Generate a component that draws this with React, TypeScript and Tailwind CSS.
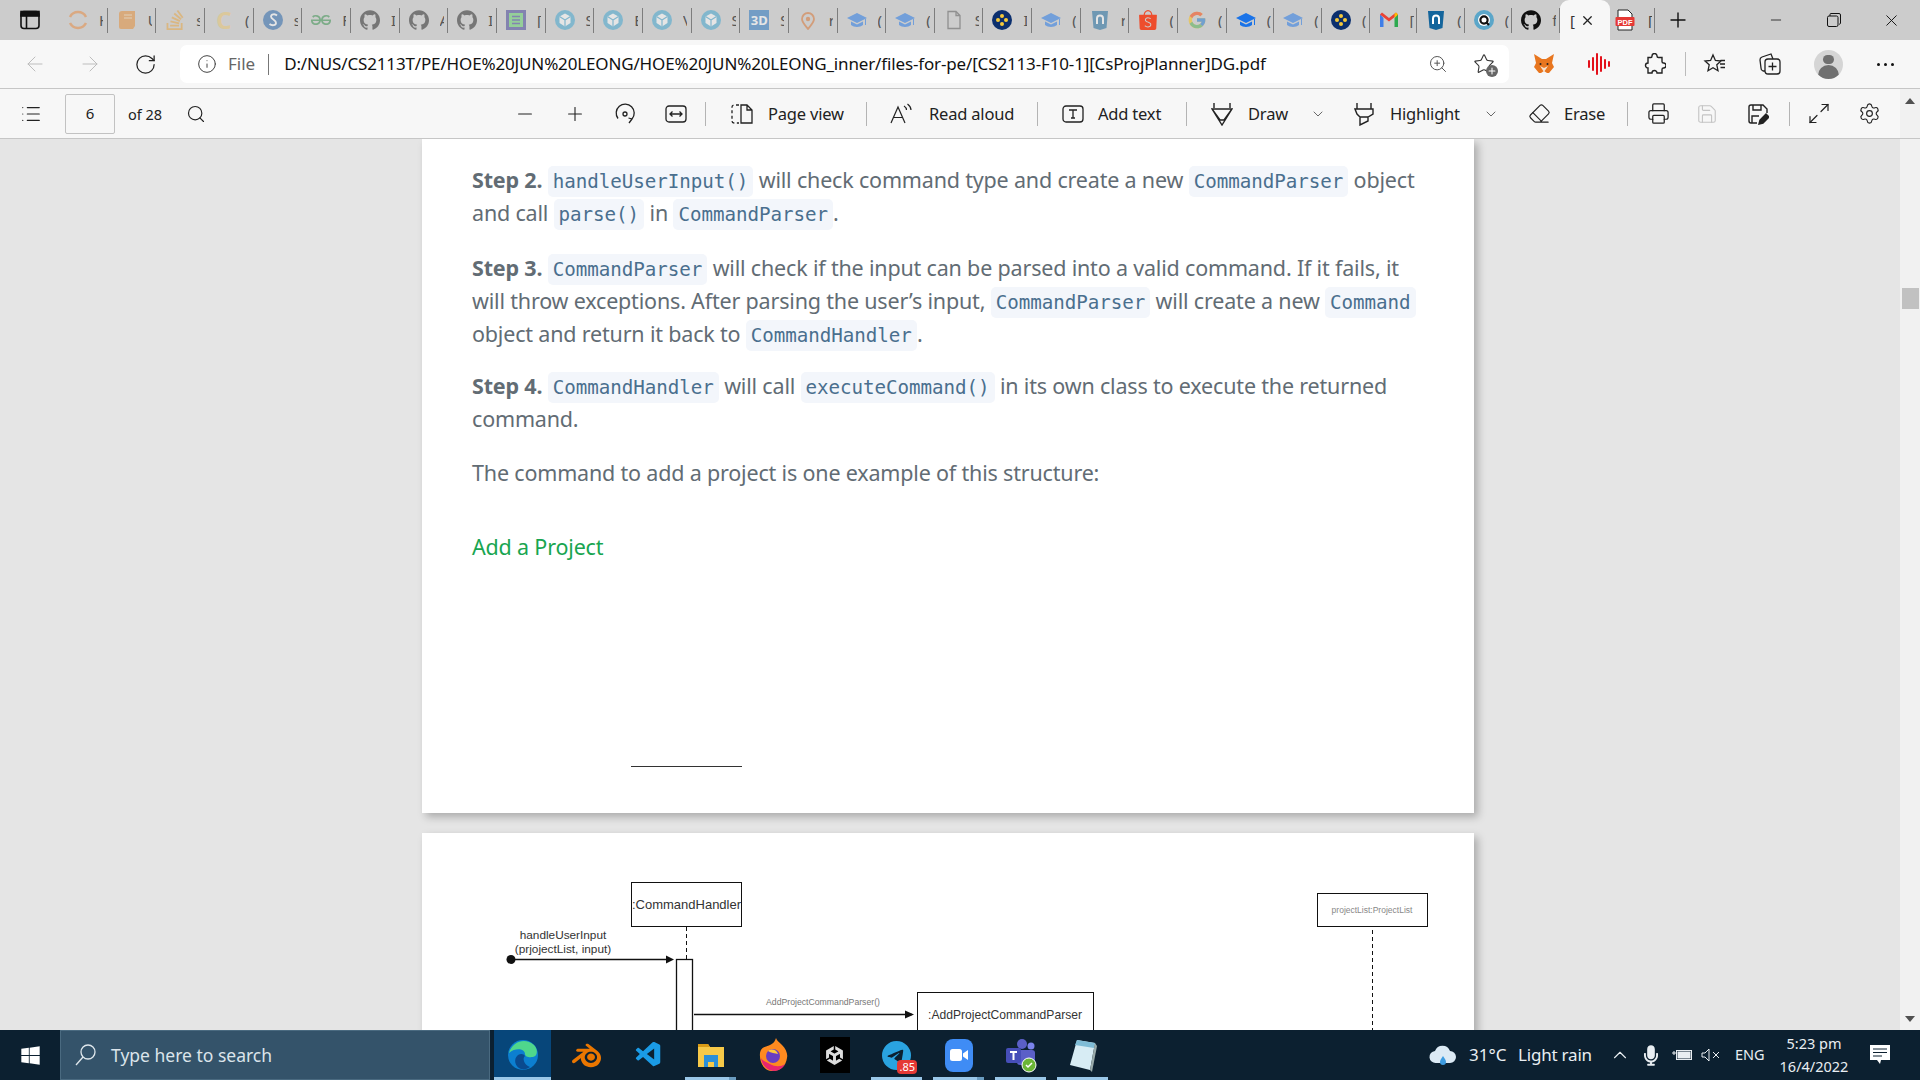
import type { ReactNode } from 'react'
import { ArrowLeft, ArrowRight, ChevronDown, ChevronUp, Eraser, Info, List, Maximize2, Minus, Plus, Printer, RotateCw, Save, Search, Settings, Star, X, ZoomIn } from 'lucide-react'
import { FaWindows, FaMicrophone } from 'react-icons/fa'
import { FcGoogle } from 'react-icons/fc'
import { VscVscode } from 'react-icons/vsc'
import { SiBlender, SiGeeksforgeeks, SiGithub, SiStackoverflow, SiTelegram, SiUnity, SiShopee } from 'react-icons/si'

const Arc = () => (
  <svg width="20" height="20" viewBox="0 0 20 20" fill="none" stroke="#e8873a" strokeWidth="2.5"><path d="M2 7a9 9 0 0 1 16 0M2 13a9 9 0 0 0 16 0" /></svg>
)
const Book = () => (
  <svg width="20" height="20" viewBox="0 0 20 20"><path d="M5 1h13v15l-2 3H4a2 2 0 0 1-2-2V4a3 3 0 0 1 3-3z" fill="#e58a2e" /><path d="M7 5h8M7 8h8" stroke="#f8d7a8" /></svg>
)
const Sblue = () => (
  <svg width="20" height="20" viewBox="0 0 20 20"><circle cx="10" cy="10" r="10" fill="#1f5fa8" /><path d="M14 5.500c-2-2-6-1.500-6 1 0 3 5 3 5 6.500 0 2.500-4 3-6.500 1" fill="none" stroke="#fff" strokeWidth="1.800" /></svg>
)
const Hex = () => (
  <svg width="20" height="20" viewBox="0 0 20 20"><circle cx="10" cy="10" r="10" fill="#3aa3cf" /><path d="M10 3.500l5.500 3v6.500L10 16.500 4.500 13V6.500z" fill="#fff" /><path d="M10 10l5.500-3.500M10 10L4.500 6.500M10 10v6.500" stroke="#3aa3cf" strokeWidth="1.200" /></svg>
)
const GreenDoc = () => (
  <svg width="20" height="20" viewBox="0 0 20 20"><rect width="20" height="20" fill="#3c3c96" /><rect x="3" y="3" width="14" height="14" fill="#5fd068" /><path d="M6 6.500h8M6 10h8M6 13.500h8" stroke="#3c3c96" strokeWidth="1.500" /></svg>
)
const ThreeD = () => (
  <div className="flex h-5 w-5 items-center justify-center bg-[#1c6fc0] text-[13px] font-bold leading-none text-white">3D</div>
)
const Pin = () => (
  <svg width="20" height="20" viewBox="0 0 20 20" fill="none"><path d="M10 19c-4-5-6-7-6-10a6 6 0 0 1 12 0c0 3-2 5-6 10z" stroke="#d9702a" strokeWidth="1.800" /><circle cx="10" cy="9" r="2.200" fill="#d9702a" /></svg>
)
const Cap = ({ color = '#1a73e8' }: { color?: string }) => (
  <svg width="20" height="20" viewBox="0 0 20 20"><path d="M10 3L0 8l10 5 10-5z" fill={color} /><path d="M4 11.500V15c3 2.500 9 2.500 12 0v-3.500L10 14.500z" fill={color} /><path d="M18.500 9v6" stroke={color} /></svg>
)
const Doc = () => (
  <svg width="20" height="20" viewBox="0 0 20 20" fill="none" stroke="#555" strokeWidth="1.300"><path d="M4 1.500h8l4 4v13H4zM12 1.500v4h4" /></svg>
)
const Dots = () => (
  <svg width="20" height="20" viewBox="0 0 20 20"><circle cx="10" cy="10" r="10" fill="#0b2f6e" /><circle cx="10" cy="6" r="2" fill="#f5c93a" /><circle cx="6" cy="10" r="2" fill="#f5c93a" /><circle cx="14" cy="10" r="2" fill="#f5c93a" /><circle cx="10" cy="14" r="2" fill="#f5c93a" /></svg>
)
const Shield = ({ color = '#14659c' }: { color?: string }) => (
  <svg width="20" height="20" viewBox="0 0 20 20"><path d="M2 1h16l-1.500 17-6.500 2-6.500-2z" fill={color} /><path d="M7 14V8.500a3 3 0 0 1 6 0V14" fill="none" stroke="#fff" strokeWidth="2" /></svg>
)
const QCircle = () => (
  <svg width="20" height="20" viewBox="0 0 20 20"><circle cx="10" cy="10" r="10" fill="#5ba6c9" /><circle cx="10" cy="10" r="6" fill="#fff" /><circle cx="10" cy="10" r="3.600" fill="none" stroke="#111" strokeWidth="2.200" /><path d="M12 12l3 3" stroke="#111" strokeWidth="2.200" /></svg>
)
const Gmail = () => (
  <svg width="20" height="20" viewBox="0 0 20 20"><path d="M1 4v13h3.500V8z" fill="#3f7ee8" /><path d="M19 4v13h-3.500V8z" fill="#2da94f" /><path d="M1 4.500l9 7 9-7-2-2-7 5.500L3 2.500z" fill="#ea4335" /><path d="M15.500 8L19 4.500 17 2.500l-1.500 1.200z" fill="#fbbc04" /></svg>
)
const Pdf = () => (
  <svg width="20" height="22" viewBox="0 0 20 22"><path d="M3 1h10l4 4v16H3z" fill="#fff" stroke="#222" /><rect x="0.500" y="8" width="19" height="9" rx="1" fill="#e53935" /><text x="10" y="15.500" textAnchor="middle" fontSize="7.500" fontWeight="700" fill="#fff" fontFamily="Liberation Sans, sans-serif">PDF</text></svg>
)

const TABS: { icon: ReactNode; label: string; faded?: boolean; narrow?: boolean }[] = [
  { icon: <Arc />, label: 'H', faded: true },
  { icon: <Book />, label: 'U', faded: true },
  { icon: <SiStackoverflow size={20} color="#e8a33a" />, label: 's', faded: true },
  { icon: <span className="text-[24px] font-bold leading-none text-[#eac56b]">C</span>, label: '(', faded: true },
  { icon: <Sblue />, label: 's', faded: true },
  { icon: <SiGeeksforgeeks size={20} color="#2f8d46" />, label: 'F', faded: true },
  { icon: <SiGithub size={20} color="#222" />, label: 'I', faded: true },
  { icon: <SiGithub size={20} color="#222" />, label: 'A', faded: true },
  { icon: <SiGithub size={20} color="#222" />, label: 'I', faded: true },
  { icon: <GreenDoc />, label: '[', faded: true },
  { icon: <Hex />, label: 'S', faded: true },
  { icon: <Hex />, label: 'E', faded: true },
  { icon: <Hex />, label: 'V', faded: true },
  { icon: <Hex />, label: 'S', faded: true },
  { icon: <ThreeD />, label: 'S', faded: true },
  { icon: <Pin />, label: 'r', faded: true },
  { icon: <Cap />, label: '(', faded: true },
  { icon: <Cap />, label: '(', faded: true },
  { icon: <Doc />, label: 'S', faded: true },
  { icon: <Dots />, label: 'I' },
  { icon: <Cap />, label: '(', faded: true },
  { icon: <Shield />, label: 'r', faded: true },
  { icon: <SiShopee size={20} color="#ee4d2d" />, label: '(' },
  { icon: <FcGoogle size={20} />, label: '(', faded: true },
  { icon: <Cap />, label: '(', narrow: true },
  { icon: <Cap />, label: '(', faded: true, narrow: true },
  { icon: <Dots />, label: '(', narrow: true },
  { icon: <Gmail />, label: '[', narrow: true },
  { icon: <Shield />, label: '(', narrow: true },
  { icon: <QCircle />, label: '(', narrow: true },
  { icon: <SiGithub size={20} color="#111" />, label: 'f', narrow: true },
]

function Tab({ icon, label, faded, narrow }: (typeof TABS)[number]) {
  return (
    <div className={`relative flex h-full items-center pl-[9px] ${narrow ? 'w-[47.6px]' : 'w-[48.67px]'}`}>
      <div className={`flex h-5 w-5 shrink-0 items-center justify-center ${faded ? 'opacity-50' : ''}`}>{icon}</div>
      <div className="ml-[11px] w-[4px] overflow-hidden text-[15px] leading-none text-[#555]">{label}</div>
      <div className="absolute right-0 top-[8px] h-[25px] w-px bg-[#7d7d7d]" />
    </div>
  )
}

function TabBar() {
  return (
    <div className="flex h-10 items-stretch bg-[#cccccc]">
      <div className="flex w-[59px] shrink-0 items-center pl-[20px]">
        <svg width="20" height="20" viewBox="0 0 20 20" fill="none" stroke="#111" strokeWidth="1.600"><rect x="1" y="1.500" width="18" height="17" rx="3" /><rect x="1" y="1.500" width="18" height="4.500" fill="#111" /><path d="M6.500 6v12" /></svg>
      </div>
      {TABS.map((t, i) => <Tab key={i} {...t} />)}
      <div className="relative flex w-[50px] items-center rounded-t-[9px] bg-[#f7f7f7] pl-[10px]">
        <span className="text-[15px] leading-none text-[#333]">[</span>
        <X size={15} className="ml-[5px] text-[#222]" />
      </div>
      <div className="relative flex w-[45px] items-center pl-[5px]">
        <Pdf />
        <div className="ml-[13px] w-[4px] overflow-hidden text-[15px] leading-none text-[#444]">[</div>
        <div className="absolute right-0 top-[8px] h-[25px] w-px bg-[#7d7d7d]" />
      </div>
      <div className="ml-[11px] flex items-center"><Plus size={24} strokeWidth={1.4} className="text-[#111]" /></div>
      <div className="ml-auto flex">
        <div className="flex w-[58px] items-center justify-center"><Minus size={16} strokeWidth={1.2} className="text-[#111]" /></div>
        <div className="flex w-[57px] items-center justify-center">
          <svg width="14" height="14" viewBox="0 0 14 14" fill="none" stroke="#111"><rect x="0.500" y="3" width="10.500" height="10.500" rx="1.500" /><path d="M3 3V1.500A1 1 0 0 1 4 .5h8a1.500 1.500 0 0 1 1.500 1.500v8a1 1 0 0 1-1.500 1" /></svg>
        </div>
        <div className="flex w-[58px] items-center justify-center"><X size={19} strokeWidth={1.2} className="text-[#111]" /></div>
      </div>
    </div>
  )
}

function Cell({ children, className = '' }: { children: ReactNode; className?: string }) {
  return <div className={`flex w-[46px] shrink-0 items-center justify-center ${className}`}>{children}</div>
}

function AddressBar() {
  return (
    <div className="flex h-[49px] items-center border-b border-[#c6c6c6] bg-[#f7f7f7]">
      <Cell className="ml-[12px]"><ArrowLeft size={24} strokeWidth={1} className="text-[#bdbdbd]" /></Cell>
      <Cell className="ml-[9px]"><ArrowRight size={24} strokeWidth={1} className="text-[#bdbdbd]" /></Cell>
      <Cell className="ml-[9px]"><RotateCw size={23} strokeWidth={1.3} className="text-[#222]" /></Cell>
      <div className="ml-[12px] flex h-[38px] w-[1329px] items-center rounded-[7px] bg-white">
        <Info size={20} strokeWidth={1.2} className="ml-[17px] text-[#444]" />
        <span className="ml-[11px] text-[17px] text-[#666]">File</span>
        <div className="ml-[13px] h-[21px] w-px bg-[#777]" />
        <span className="ml-[15px] whitespace-nowrap text-[17px] tracking-[-0.15px] text-[#111]">D:/NUS/CS2113T/PE/HOE%20JUN%20LEONG/HOE%20JUN%20LEONG_inner/files-for-pe/[CS2113-F10-1][CsProjPlanner]DG.pdf</span>
        <div className="ml-auto flex items-center">
          <ZoomIn size={20} strokeWidth={1.2} className="text-[#555]" />
          <div className="relative ml-[25px] mr-[14px]">
            <Star size={22} strokeWidth={1.2} className="text-[#333]" />
            <div className="absolute -bottom-[2px] -right-[3px] flex h-[12px] w-[12px] items-center justify-center rounded-full bg-[#666] text-[#fff]"><Plus size={10} strokeWidth={2.5} /></div>
          </div>
        </div>
      </div>
      <Cell className="ml-[12px]">
        <svg width="22" height="22" viewBox="0 0 22 22"><path d="M1 1l8 5h4l8-5-2 9 2 4-5 6h-2l-3-2-3 2H6l-5-6 2-4z" fill="#e8761f" /><path d="M7 13l4 6 4-6-4 2z" fill="#f5e2cf" /><circle cx="7.500" cy="11" r="1" fill="#222" /><circle cx="14.500" cy="11" r="1" fill="#222" /></svg>
      </Cell>
      <Cell className="ml-[9px]">
        <svg width="24" height="24" viewBox="0 0 24 24" stroke="#e3101a" strokeWidth="2" strokeLinecap="round"><path d="M2 9v6M6 6v12M10 2v20M14 5v14M18 8v8M22 10v4" /></svg>
      </Cell>
      <Cell className="ml-[10px]">
        <svg width="22" height="22" viewBox="0 0 22 22" fill="none" stroke="#222" strokeWidth="1.400"><path d="M8 3a2.500 2.500 0 0 1 5 0c0 1 .5 1.500 1.500 1.500H18v4c0 1 .5 1.500 1.500 1.500a2.500 2.500 0 0 1 0 5c-1 0-1.500.5-1.500 1.500V20h-5a2.500 2.500 0 0 0-5 0H4v-5a2.500 2.500 0 0 1 0-5V4.500h3C7.500 4.500 8 4 8 3z" /></svg>
      </Cell>
      <div className="ml-[7px] h-[24px] w-px bg-[#bbb]" />
      <Cell className="ml-[6px]">
        <svg width="24" height="24" viewBox="0 0 24 24" fill="none" stroke="#222" strokeWidth="1.300"><path d="M10 3l2.400 5.500 5.600.5-4.200 3.800 1.200 6L10 15.800 5 18.800l1.200-6L2 9l5.600-.5zM17 12h5M17.500 15.500h4.500M17.500 8.500h4.500" /></svg>
      </Cell>
      <Cell className="ml-[9px]">
        <svg width="24" height="24" viewBox="0 0 24 24" fill="none" stroke="#222" strokeWidth="1.300"><rect x="7" y="7" width="15" height="15" rx="3" /><path d="M7 19H5a3 3 0 0 1-2-3L2 8a3 3 0 0 1 2-3l9-3 2 5M14.500 10.500v8M10.500 14.500h8" /></svg>
      </Cell>
      <Cell className="ml-[12px]">
        <div className="flex h-[29px] w-[29px] flex-col items-center overflow-hidden rounded-full bg-[#d5d5d5]">
          <div className="mt-[5px] h-[11px] w-[11px] rounded-full bg-[#707070]" />
          <div className="mt-[1px] h-[16px] w-[21px] rounded-t-full bg-[#707070]" />
        </div>
      </Cell>
      <Cell className="ml-[11px]">
        <div className="flex gap-[4px]"><div className="h-[3px] w-[3px] rounded-full bg-[#111]" /><div className="h-[3px] w-[3px] rounded-full bg-[#111]" /><div className="h-[3px] w-[3px] rounded-full bg-[#111]" /></div>
      </Cell>
    </div>
  )
}

function Sep({ className = '' }: { className?: string }) {
  return <div className={`h-[24px] w-px shrink-0 bg-[#b4b4b4] ${className}`} />
}

function Label({ children, className = '' }: { children: ReactNode; className?: string }) {
  return <span className={`shrink-0 translate-y-px whitespace-nowrap text-[16.500px] tracking-[-0.2px] text-[#222] ${className}`}>{children}</span>
}

function Box({ children, className = '' }: { children: ReactNode; className?: string }) {
  return <div className={`flex h-6 w-6 shrink-0 items-center justify-center text-[#222] ${className}`}>{children}</div>
}

function PdfToolbar() {
  return (
    <div className="flex h-[50px] items-center border-b border-[#c6c6c6] bg-[#f7f7f7]">
      <Cell className="ml-[8px]"><List size={22} strokeWidth={1.3} className="text-[#222]" /></Cell>
      <div className="ml-[11px] flex h-[40px] w-[50px] shrink-0 items-center justify-center rounded-[2px] border border-[#c2c2c2] text-[15px] text-[#222]">6</div>
      <span className="ml-[13px] w-[33px] shrink-0 translate-y-px whitespace-nowrap text-[14.500px] text-[#222]">of 28</span>
      <Cell className="ml-[12px]"><Search size={20} strokeWidth={1.4} className="text-[#222]" /></Cell>
      <Cell className="ml-[283px]"><Minus size={22} strokeWidth={1.2} className="text-[#222]" /></Cell>
      <Cell className="ml-[4px]"><Plus size={22} strokeWidth={1.2} className="text-[#222]" /></Cell>
      <Cell className="ml-[4px]">
        <svg width="22" height="22" viewBox="0 0 22 22" fill="none" stroke="#222" strokeWidth="1.300"><path d="M4 15.500A9 9 0 1 1 18 16l-3 4M18 16l-3.500-1" /><circle cx="11" cy="11" r="2" /></svg>
      </Cell>
      <Cell className="ml-[5px]">
        <svg width="22" height="18" viewBox="0 0 22 18" fill="none" stroke="#222" strokeWidth="1.300"><rect x="1" y="1" width="20" height="16" rx="3" /><path d="M5 9h12M7.500 6.500L5 9l2.500 2.500M14.500 6.500L17 9l-2.500 2.500" /></svg>
      </Cell>
      <Sep className="ml-[6px]" />
      <Box className="ml-[24px]">
        <svg width="22" height="20" viewBox="0 0 22 20" fill="none" stroke="#222" strokeWidth="1.300"><path d="M8 1H3a2 2 0 0 0-2 2v14a2 2 0 0 0 2 2h5" strokeDasharray="3 2.500" /><path d="M10 1h6l5 5v13H10zM16 1v5h5" /></svg>
      </Box>
      <Label className="ml-[14px] w-[75px]">Page view</Label>
      <Sep className="ml-[23px]" />
      <Box className="ml-[22px]">
        <svg width="24" height="22" viewBox="0 0 24 22" fill="none" stroke="#222" strokeWidth="1.200"><path d="M2 20L9 4l7 16M4.500 14.500h9M15 3c1.500 1 2.500 2.500 2.500 4M18.500 1c2 1.500 3.500 3.500 3.500 6" /></svg>
      </Box>
      <Label className="ml-[16px] w-[85px]">Read aloud</Label>
      <Sep className="ml-[23px]" />
      <Box className="ml-[23px]">
        <svg width="22" height="18" viewBox="0 0 22 18" fill="none" stroke="#222" strokeWidth="1.300"><rect x="1" y="1" width="20" height="16" rx="3" /><path d="M7 5h8M11 5v8M9 13h4" /></svg>
      </Box>
      <Label className="ml-[13px] w-[65px]">Add text</Label>
      <Sep className="ml-[23px]" />
      <Box className="ml-[23px]">
        <svg width="22" height="24" viewBox="0 0 22 24" fill="none" stroke="#222" strokeWidth="1.400"><path d="M3 1v5M19 1v5M1 7h20l-8 11h-4zM1 7l10 16L21 7" /></svg>
      </Box>
      <Label className="ml-[14px] w-[40px]">Draw</Label>
      <ChevronDown size={16} strokeWidth={1.2} className="ml-[22px] shrink-0 text-[#444]" />
      <Box className="ml-[26px]">
        <svg width="20" height="24" viewBox="0 0 20 24" fill="none" stroke="#222" strokeWidth="1.400"><path d="M3 1v6M17 1v6M1 7h18v5l-5 3H6l-3-3zM6 15v8l8-4v-4" /></svg>
      </Box>
      <Label className="ml-[14px] w-[71px]">Highlight</Label>
      <ChevronDown size={16} strokeWidth={1.2} className="ml-[22px] shrink-0 text-[#444]" />
      <Box className="ml-[28px]"><Eraser size={23} strokeWidth={1.2} /></Box>
      <Label className="ml-[13px] w-[40px]">Erase</Label>
      <Sep className="ml-[23px]" />
      <Box className="ml-[18px]"><Printer size={23} strokeWidth={1.3} /></Box>
      <Box className="ml-[25px]"><Save size={22} strokeWidth={1.2} className="text-[#c4c4c4]" /></Box>
      <Box className="ml-[27px]">
        <svg width="22" height="22" viewBox="0 0 22 22" fill="none" stroke="#222" strokeWidth="1.400"><path d="M10 20H4a2 2 0 0 1-2-2V4a2 2 0 0 1 2-2h12l4 4v4M6 2v5h8V2M5 20v-7h7" /><path d="M12 21l1-4 6-6 3 3-6 6z" fill="#222" /></svg>
      </Box>
      <Sep className="ml-[19px]" />
      <Box className="ml-[17px]"><Maximize2 size={25} strokeWidth={1.2} /></Box>
      <Box className="ml-[26px]"><Settings size={23} strokeWidth={1.2} /></Box>
      <div className="ml-auto flex h-full w-[20px] shrink-0 justify-center bg-[#f1f1f1] pt-[9px]">
        <div className="h-0 w-0 border-x-[5px] border-b-[6px] border-x-transparent border-b-[#505050]" />
      </div>
    </div>
  )
}

function Code({ children }: { children: ReactNode }) {
  return <code className="rounded-[5px] bg-[#f3f6fb] px-[5px] py-[4px] font-['DejaVu_Sans_Mono',monospace] text-[19.200px] leading-none tracking-[-0.05px] text-[#4a6f8e]">{children}</code>
}

function PageOne() {
  return (
    <div className="h-[674px] w-[1052px] shrink-0 bg-white pl-[50px] pr-[48px] pt-[24px] text-[21.500px] leading-[33px] tracking-[-0.18px] text-[#626c74] shadow-[4px_4px_8px_rgba(0,0,0,0.25)]">
      <p>
        <b className="font-bold">Step 2.</b> <Code>handleUserInput()</Code> will check command type and create a new <Code>CommandParser</Code> object and call <Code>parse()</Code> in <Code>CommandParser</Code>.
      </p>
      <p className="mt-[22px]">
        <b className="font-bold">Step 3.</b> <Code>CommandParser</Code> will check if the input can be parsed into a valid command. If it fails, it will throw exceptions. After parsing the user’s input, <Code>CommandParser</Code> will create a new <Code>Command</Code> object and return it back to <Code>CommandHandler</Code>.
      </p>
      <p className="mt-[19px]">
        <b className="font-bold">Step 4.</b> <Code>CommandHandler</Code> will call <Code>executeCommand()</Code> in its own class to execute the returned command.
      </p>
      <p className="mt-[21px]">The command to add a project is one example of this structure:</p>
      <p className="mt-[41px] text-[#18a550]">Add a Project</p>
      <div className="ml-[159px] mt-[203px] h-px w-[111px] bg-[#333]" />
    </div>
  )
}

function PageTwo() {
  return (
    <div className="h-[400px] w-[1052px] shrink-0 bg-white shadow-[4px_4px_8px_rgba(0,0,0,0.25)]">
      <svg width="1052" height="400" viewBox="0 0 1052 400" fontFamily="Liberation Sans, sans-serif">
        <rect x="209.500" y="49.500" width="110" height="44" fill="#fff" stroke="#111" />
        <text x="264.500" y="76" textAnchor="middle" fontSize="13" fill="#333">:CommandHandler</text>
        <path d="M264.500 94v32" stroke="#111" strokeDasharray="4 3" />
        <text x="141" y="106" textAnchor="middle" fontSize="11.800" fill="#333">handleUserInput</text>
        <text x="141" y="120" textAnchor="middle" fontSize="11.800" fill="#333">(prjojectList, input)</text>
        <circle cx="89" cy="126.500" r="4.500" fill="#111" />
        <path d="M89 126.500h155" stroke="#111" strokeWidth="1.300" />
        <path d="M252 126.500l-8-4v8z" fill="#111" />
        <rect x="254.500" y="126.500" width="16" height="100" fill="#fff" stroke="#111" strokeWidth="1.300" />
        <path d="M272 181.500h218" stroke="#111" strokeWidth="1.300" />
        <path d="M492 181.500l-9-4v8z" fill="#111" />
        <text x="401" y="172" textAnchor="middle" fontSize="8.700" fill="#777">AddProjectCommandParser()</text>
        <rect x="495.500" y="159.500" width="176" height="60" fill="#fff" stroke="#111" />
        <text x="583" y="186" textAnchor="middle" fontSize="12.100" fill="#333">:AddProjectCommandParser</text>
        <rect x="895.500" y="60.500" width="110" height="33" fill="#fff" stroke="#111" />
        <text x="950" y="80" textAnchor="middle" fontSize="8.500" fill="#888">projectList:ProjectList</text>
        <path d="M950.500 97v130" stroke="#111" strokeDasharray="4 3" />
      </svg>
    </div>
  )
}

function Viewer() {
  return (
    <div className="relative flex h-[891px] overflow-hidden bg-[#e5e5e5]">
      <div className="flex w-[1900px] flex-col items-start gap-[20px] pl-[422px]">
        <PageOne />
        <PageTwo />
      </div>
      <div className="flex w-[20px] flex-col items-center bg-[#f1f1f1] pb-[8px]">
        <div className="mt-[149px] h-[21px] w-[17px] bg-[#c1c1c1]" />
        <div className="mt-auto h-0 w-0 border-x-[5px] border-t-[6px] border-x-transparent border-t-[#505050]" />
      </div>
    </div>
  )
}

function TaskIcon({ children, open, split }: { children: ReactNode; open?: boolean; split?: boolean }) {
  return (
    <div className="relative flex h-full w-[51px] shrink-0 items-center justify-center">
      {children}
      {open && <div className="absolute bottom-0 left-0 right-0 h-[3px] bg-[#9ac7e8]" />}
      {split && <div className="absolute bottom-0 right-0 h-[3px] w-[7px] bg-[#6a9cc0]" />}
    </div>
  )
}

function Taskbar() {
  return (
    <div className="flex h-[50px] items-center bg-[#0c2030] text-[#e9eef2]">
      <div className="flex w-[60px] shrink-0 items-center justify-center"><FaWindows size={21} color="#fff" /></div>
      <div className="flex h-full w-[430px] shrink-0 items-center border border-[#4a6a80] bg-[#34536a]">
        <svg width="22" height="24" viewBox="0 0 22 24" fill="none" stroke="#dfe7ec" strokeWidth="1.300" className="ml-[14px]"><circle cx="13" cy="9" r="7" /><path d="M8 14l-7 8" /></svg>
        <span className="ml-[14px] text-[17.500px] text-[#dbe4ea]">Type here to search</span>
      </div>
      <div className="relative ml-[4px] flex h-full w-[57px] shrink-0 items-center justify-center bg-[#07467a]">
        <svg width="32" height="32" viewBox="0 0 32 32"><circle cx="16" cy="16" r="15" fill="#0c7fd0" /><path d="M2 14C5 3 18-2 27 6c4 4 4 11-1 12-4 .5-8 0-8-3 0-5-9-7-16-1z" fill="#4fd68c" /><path d="M14 30c-6-2-8-10-3-14 3-2 6-1 7 1-3 2-1 9 5 11-3 2-6 3-9 2z" fill="#0a4a8f" /></svg>
        <div className="absolute bottom-0 left-0 right-0 h-[3px] bg-[#9ac7e8]" />
      </div>
      <div className="ml-[10px] flex h-full gap-[11px]">
        <TaskIcon><SiBlender size={29} color="#ea7600" /></TaskIcon>
        <TaskIcon><VscVscode size={30} color="#1a9be6" /></TaskIcon>
        <TaskIcon open split>
          <svg width="28" height="28" viewBox="0 0 28 28"><path d="M1 3h10l2 3h14v20H1z" fill="#f7c948" /><path d="M1 3h10l2 3H1z" fill="#d99b16" /><path d="M7 14h14v12h-4v-5h-6v5H7z" fill="#2b8fd8" /></svg>
        </TaskIcon>
        <TaskIcon>
          <svg width="30" height="34" viewBox="0 0 30 34"><path d="M2 15C3 8 9 9 12 7c4-2 5-4 6-7 1 3 3 4 6 7 4 4 6 9 5 13-1 8-7 13-14 13C7 33 1 26 2 15z" fill="#ff8a1f" /><path d="M3 20c1 8 7 13 13 13 5 0 9-3 11-7-4 3-10 3-15 0-4-2-7-3-9-6z" fill="#e8256f" /><circle cx="15" cy="18" r="7" fill="#6a3ec2" /><path d="M10 13c4-3 9-1 10 3-3-1-7-1-10-3z" fill="#ffc93c" /></svg>
        </TaskIcon>
        <TaskIcon>
          <div className="flex h-[36px] w-[30px] items-center justify-center bg-black"><SiUnity size={19} color="#ddd" /></div>
        </TaskIcon>
        <TaskIcon open>
          <div className="relative">
            <SiTelegram size={29} color="#2aa3e0" />
            <div className="absolute -bottom-[4px] -right-[6px] rounded-[4px] bg-[#e53935] px-[2px] text-[11px] leading-[14px] text-white">.85</div>
          </div>
        </TaskIcon>
        <TaskIcon open split>
          <div className="flex h-[33px] w-[28px] items-center justify-center rounded-[8px] bg-[#3f8cf5]">
            <svg width="18" height="12" viewBox="0 0 18 12" fill="#fff"><rect width="12" height="12" rx="2.500" /><path d="M13 4.500L18 1v10l-5-3.500z" /></svg>
          </div>
        </TaskIcon>
        <TaskIcon open>
          <svg width="32" height="36" viewBox="0 0 32 36"><circle cx="17" cy="7" r="5" fill="#5b5fc7" /><circle cx="26" cy="9" r="3.500" fill="#7b83eb" /><rect x="12" y="13" width="18" height="15" rx="3" fill="#5b5fc7" /><rect x="1" y="11" width="15" height="15" rx="2" fill="#464eb8" /><path d="M5 15h7M8.500 15v8" stroke="#fff" strokeWidth="2" /><circle cx="24" cy="28" r="7" fill="#6bb536" stroke="#fff" /><path d="M21 28l2 2 4-4" fill="none" stroke="#fff" strokeWidth="1.500" /></svg>
        </TaskIcon>
        <TaskIcon open>
          <svg width="30" height="34" viewBox="0 0 30 34"><path d="M9 2l18 3-5 27L2 27z" fill="#d7ecf4" /><path d="M9 2l18 3-1 5L7 7z" fill="#7fbcd6" /><path d="M22 32l5-27 2 3-5 26z" fill="#9aa" /></svg>
        </TaskIcon>
      </div>
      <svg width="28" height="24" viewBox="0 0 28 24" className="ml-[321px] shrink-0"><path d="M7 20a6 6 0 0 1-1-12 8 8 0 0 1 15 0 6 6 0 0 1 0 12z" fill="#dceaf5" /><path d="M14 13c2 3 3 4 3 6a3 3 0 0 1-6 0c0-2 1-3 3-6z" fill="#3d9be0" /></svg>
      <span className="ml-[12px] w-[49px] shrink-0 whitespace-nowrap text-[17px]">31°C</span>
      <span className="w-[73px] shrink-0 whitespace-nowrap text-[17px] tracking-[-0.2px]">Light rain</span>
      <ChevronUp size={22} strokeWidth={1.2} className="ml-[18px] shrink-0" />
      <div className="ml-[13px] flex w-[14px] shrink-0 justify-center"><FaMicrophone size={21} /></div>
      <svg width="20" height="14" viewBox="0 0 20 14" fill="none" stroke="#e9eef2" className="ml-[14px] shrink-0"><rect x="4.500" y="2.500" width="15" height="9" /><rect x="6" y="4" width="12" height="6" fill="#e9eef2" /><path d="M0 5h4M2 3v4" /></svg>
      <div className="ml-[9px] flex w-[20px] shrink-0 items-center">
        <svg width="20" height="14" viewBox="0 0 20 14" fill="none" stroke="#e9eef2"><path d="M1 5h3l4-4v12L4 9H1zM12 4l6 6M18 4l-6 6" /></svg>
      </div>
      <span className="ml-[14px] w-[29px] shrink-0 text-[14.500px]">ENG</span>
      <div className="ml-[14px] flex w-[72px] shrink-0 flex-col items-center text-[14.500px] leading-[23px]">
        <span className="whitespace-nowrap">5:23 pm</span>
        <span className="whitespace-nowrap">16/4/2022</span>
      </div>
      <svg width="22" height="22" viewBox="0 0 22 22" className="ml-[19px] shrink-0"><path d="M1 1h20v15H12l-1 4-3-4H1z" fill="#fff" /><path d="M4 5h14M4 8.500h14M4 12h9" stroke="#0c2030" /></svg>
    </div>
  )
}

export default function App() {
  return (
    <div className="flex h-[1080px] w-[1920px] flex-col overflow-hidden font-['Noto_Sans',sans-serif]">
      <TabBar />
      <AddressBar />
      <PdfToolbar />
      <Viewer />
      <Taskbar />
    </div>
  )
}
